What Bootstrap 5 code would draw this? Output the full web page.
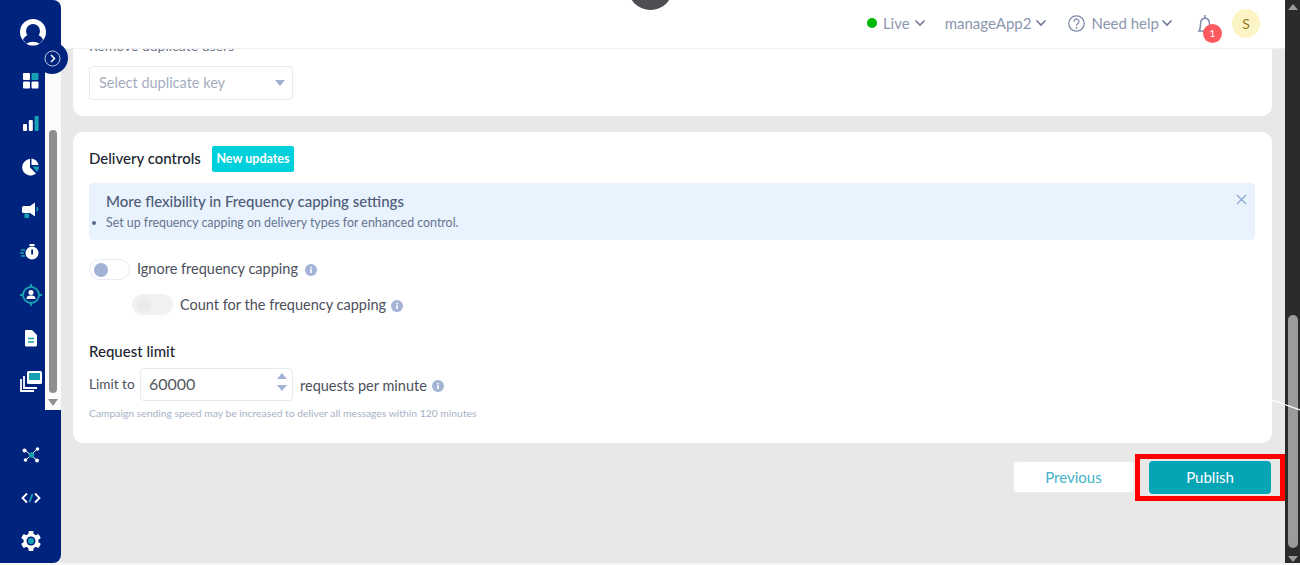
<!doctype html>
<html lang="en">
<head>
<meta charset="utf-8">
<title>Delivery controls</title>
<link href="https://cdn.jsdelivr.net/npm/bootstrap@5.3.0/dist/css/bootstrap.min.css" rel="stylesheet">
<style>
html,body{height:565px;overflow:hidden;background:#f6f6f6}
body{font-family:"Lato","Liberation Sans",sans-serif;color:#4b4f5c;font-size:14.5px}
.app-shell{height:563px;position:relative}
.side-rail{width:61px;background:#00237d;border-radius:0 8px 8px 0;position:relative;z-index:3;flex:none}
.rail-logo{height:60px;padding:19px 0 0 19px}
.rail-middle{height:350px}
.rail-icons{width:45px}
.rail-strip{width:16px;background:#fbfbfb;position:relative}
.rail-thumb{position:absolute;left:4px;width:8px;top:70px;height:263px;background:#8f8f8f;border-radius:4px}
.rail-arrow{position:absolute;left:3px;bottom:4px;width:0;height:0;border:5px solid transparent;border-top:7px solid #8f8f8f;border-bottom:0}
.rail-item{height:42.75px;padding-left:19px;display:flex;align-items:center}
.rail-bottom{padding-top:24px}
.rail-toggle{position:absolute;left:36px;top:42px;width:32px;height:32px;border-radius:50%;background:#00237d;display:flex;align-items:center;justify-content:center}
.work-area{background:#e8e8e8;min-width:0;position:relative;overflow:hidden}
.top-header{height:49px;background:#fff;border-bottom:1px solid #f0f0f0;position:relative;z-index:2;padding:0 25px 2px 0;color:#8c96ae;font-size:15px}
.hdr-dot{width:10px;height:10px;border-radius:50%;background:#00b800;margin-right:6px}
.hdr-txt{margin-right:4px}
.hdr-txt-last{margin-right:2px}
.chev-a{margin-right:19px}
.chev-b{margin-right:21px}
.hdr-help{margin-right:6px}
.hdr-badge{position:absolute;left:7px;top:13px;width:19px;height:19px;border-radius:50%;background:#ff5a5f;color:#fff;font-size:10px;display:flex;align-items:center;justify-content:center}
.hdr-bell{width:24px;height:24px;position:relative;margin-left:23px;margin-right:12px}
.hdr-avatar{width:28px;height:29px;border-radius:50%;background:#fdf4c5;color:#8d7a1e;font-size:14px}
.page-scroll{padding:0 13px 0 12px;height:514px}
.panel-box{background:#fff;border-radius:10px;padding:16px 17px 16px 16px}
.panel-cut{margin-top:-22px;height:89px;margin-bottom:16px}
.panel-cut .cut-label{height:16px;line-height:16px;margin-bottom:12px;margin-top:-5px;font-size:14px;color:#6d7488}
.dup-select{width:204px;height:34px;border:1px solid #e4e9f3;border-radius:4px;color:#a4adc0;font-size:14.5px;padding:0 7px 0 9px}
.dup-caret{width:0;height:0;border:5px solid transparent;border-top:6px solid #a3b1d0;border-bottom:0}
.panel-main{height:311px;padding-top:14px}
.panel-title{font-weight:500;color:#20242e;font-size:15px;width:110px;white-space:nowrap;margin-top:-1px}
.new-tag{background:#00cfdc;color:#fff;font-weight:700;font-size:12.5px;height:26px;width:82px;border-radius:2px;display:flex;align-items:center;justify-content:center;margin-left:13px}
.note-box{background:#e8f3fd;border:0;border-radius:4px;height:57px;margin:11px 0 19px;padding:9px 17px;position:relative;color:#66738f}
.note-title{font-size:15px;font-weight:500;color:#4d5b78;line-height:19px}
.note-text{font-size:12.4px;line-height:17px;margin-top:3px;position:relative}
.note-text::before{content:"";position:absolute;left:-14px;top:7px;width:4px;height:4px;background:#5d6a86;border-radius:50%}
.note-close{position:absolute;right:8px;top:11px;line-height:0}
.tog{width:41px;height:21px;border-radius:11px;border:1px solid #e7ebf5;background:#fff;position:relative;flex:none;display:block}
.tog::before{content:"";position:absolute;left:4px;top:3px;width:14px;height:14px;border-radius:50%;background:#a3b3d6}
.tog-off{background:#f1f1f1;border-color:#f1f1f1}
.tog-off::before{background:#ebebeb}
.row-one{height:21px;gap:7px}
.row-one-label{margin-top:-2px}
.row-two{height:21px;gap:7px;margin:14px 0 0 43px}
.info-tight{margin-left:-2px;margin-top:2px}
.limit-title{font-weight:500;color:#20242e;margin-top:27px;line-height:18px;font-size:15px}
.limit-row{margin-top:8px;height:33px}
.limit-label{width:45px;white-space:nowrap;font-size:13.6px}
.limit-box{width:153px;height:33px;margin:0 7px 0 6px;position:relative}
.limit-box .form-control{height:33px;border:1px solid #e4e9f3;border-radius:4px;padding:0 8px 2px;color:#55585f;font-size:16px;box-shadow:none}
.spin-up,.spin-down{position:absolute;right:6px;width:0;height:0;border:5px solid transparent}
.spin-up{top:5px;border-bottom:6px solid #a3b3d6;border-top:0}
.spin-down{top:17px;border-top:6px solid #a3b3d6;border-bottom:0}
.limit-txt{margin-top:2px}
.limit-info{margin-left:5px;margin-top:2px}
.limit-help{font-size:10.35px;color:#a7b2c7;margin-top:5px;line-height:14px}
.foot-btns{margin-top:18px;gap:15px;padding-right:1px}
.btn-prev{width:121px;height:32px;background:#fff;border:1px solid #eee;color:#3fb4c8;border-radius:4px;font-size:15px;padding:0}
.btn-prev:hover{background:#fff;color:#3fb4c8}
.btn-pub{width:122px;height:33px;background:#06a5b6;border:0;color:#fff;border-radius:4px;font-size:15px;padding:0}
.btn-pub:hover{background:#06a5b6;color:#fff}
.mark-wrap{position:relative}
.mark-box{position:absolute;left:-14px;top:-7px;width:150px;height:47px;border:5px solid #f00;pointer-events:none}
.page-bar{width:15px;background:#2b2b2b;position:relative;flex:none}
.page-thumb{position:absolute;left:3px;width:10px;top:315px;height:233px;background:#9b9b9b;border-radius:5px}
.bar-up,.bar-down{position:absolute;left:3px;width:0;height:0;border:5px solid transparent}
.bar-up{top:4px;border-bottom:6px solid #9b9b9b;border-top:0}
.bar-down{top:556px;border-top:6px solid #9b9b9b;border-bottom:0}
.dark-blob{position:absolute;left:628px;top:-35px;width:45px;height:45px;border-radius:50%;background:#4c4e53;z-index:4}
.stray-line{position:absolute;left:1272px;top:398px;z-index:4;line-height:0}
</style>
</head>
<body>
<div class="app-shell d-flex">
  <nav class="side-rail d-flex flex-column">
    <div class="rail-logo">
      <svg width="28" height="28" viewBox="0 0 28 28"><circle cx="14" cy="13" r="13" fill="#fff"/><circle cx="14" cy="12" r="7" fill="#00237d"/><path d="M4 21c2-5 6-6 10-6s8 1 10 6l-3 3H7z" fill="#00237d"/><path d="M8 25c2-3 10-3 12 0-3 2-9 2-12 0z" fill="#fff"/></svg>
    </div>
    <div class="rail-middle d-flex">
      <div class="rail-icons">
        <div class="rail-item"><svg width="24" height="24" viewBox="0 0 24 24"><rect x="4" y="4" width="7" height="7" rx="1" fill="#fff"/><rect x="12.500" y="4" width="7" height="7" rx="1" fill="#17a2b3"/><rect x="4" y="12.500" width="7" height="7" rx="1" fill="#fff"/><rect x="12.500" y="12.500" width="7" height="7" rx="1" fill="#fff"/></svg></div>
        <div class="rail-item"><svg width="24" height="24" viewBox="0 0 24 24"><rect x="4" y="12" width="4" height="7" rx="1" fill="#fff"/><rect x="9.800" y="8" width="4" height="11" rx="1" fill="#fff"/><rect x="15.600" y="4" width="4" height="15" rx="1" fill="#17a2b3"/></svg></div>
        <div class="rail-item"><svg width="24" height="24" viewBox="0 0 24 24"><path d="M11 4v8.500l6 6a8.300 8.300 0 1 1-6-14.500z" fill="#fff"/><path d="M12.500 3.500a8.500 8.500 0 0 1 7 6.500h-7z" fill="#fff"/><path d="M13.500 11.500h6.500a8 8 0 0 1-2 5.500z" fill="#17a2b3"/></svg></div>
        <div class="rail-item"><svg width="24" height="24" viewBox="0 0 24 24"><path d="M4.500 8H11l5-3.500v14L11 15H4.500A1.500 1.500 0 0 1 3 13.500v-4A1.500 1.500 0 0 1 4.500 8z" fill="#fff"/><rect x="5.500" y="15.500" width="4.500" height="4.500" fill="#17a2b3"/><path d="M17.500 8.500a3 3 0 0 1 0 5.500z" fill="#17a2b3"/></svg></div>
        <div class="rail-item"><svg width="24" height="24" viewBox="0 0 24 24"><circle cx="13" cy="13" r="6.500" fill="#fff"/><rect x="10.500" y="4" width="5" height="2" fill="#fff"/><rect x="12.200" y="9.500" width="1.800" height="5" fill="#00237d"/><path d="M2 10h4M1 13h4M2 16h4" stroke="#17a2b3" stroke-width="1.500"/></svg></div>
        <div class="rail-item"><svg width="24" height="24" viewBox="0 0 24 24"><circle cx="12" cy="12" r="8" fill="none" stroke="#17a2b3" stroke-width="1.800"/><path d="M12 1v4M12 19v4M1 12h4M19 12h4" stroke="#17a2b3" stroke-width="1.800"/><circle cx="12" cy="9.500" r="2.500" fill="#fff"/><path d="M7.500 16c0-3 2-3.500 4.500-3.500s4.500.5 4.500 3.500z" fill="#fff"/></svg></div>
        <div class="rail-item"><svg width="24" height="24" viewBox="0 0 24 24"><path d="M7 4h6l5 5v10a1.500 1.500 0 0 1-1.500 1.500h-9.500A1.500 1.500 0 0 1 6 19V5a1 1 0 0 1 1-1z" fill="#fff"/><path d="M9 12.500h6M9 16h6" stroke="#17a2b3" stroke-width="1.400"/></svg></div>
        <div class="rail-item"><svg width="24" height="24" viewBox="0 0 24 24"><rect x="8" y="2" width="15" height="13" rx="1.500" fill="#fff"/><rect x="10" y="4" width="11" height="7" fill="#17a2b3"/><path d="M5 7v12h13M2 10v12h13" fill="none" stroke="#fff" stroke-width="1.800"/></svg></div>
      </div>
      <div class="rail-strip"><div class="rail-thumb"></div><div class="rail-arrow"></div></div>
    </div>
    <div class="rail-bottom">
      <div class="rail-item"><svg width="24" height="24" viewBox="0 0 24 24"><path d="M6 7.500l6 4.500 6-6M7 17l5-5 6 5.500" fill="none" stroke="#fff" stroke-width="1"/><circle cx="12.500" cy="12" r="2.800" fill="#17a2b3"/><circle cx="5.500" cy="7.500" r="2" fill="#fff"/><circle cx="18.500" cy="6" r="1.800" fill="#fff"/><circle cx="6.500" cy="17" r="1.800" fill="#fff"/><circle cx="18" cy="17.500" r="2" fill="#fff"/></svg></div>
      <div class="rail-item"><svg width="24" height="24" viewBox="0 0 24 24"><path d="M8 7.500L3.500 12 8 16.500M16 7.500l4.500 4.500-4.500 4.500" fill="none" stroke="#fff" stroke-width="1.800"/><path d="M10.500 16l3-8" stroke="#17a2b3" stroke-width="1.800"/></svg></div>
      <div class="rail-item"><svg width="24" height="24" viewBox="0 0 24 24"><g fill="#fff"><rect x="9.500" y="2" width="5" height="20" rx="1"/><rect x="9.500" y="2" width="5" height="20" rx="1" transform="rotate(60 12 12)"/><rect x="9.500" y="2" width="5" height="20" rx="1" transform="rotate(120 12 12)"/><circle cx="12" cy="12" r="7.500"/></g><circle cx="12" cy="12" r="4.500" fill="#00237d"/><circle cx="12" cy="12" r="3" fill="#17a2b3"/></svg></div>
    </div>
    <div class="rail-toggle"><svg width="17" height="17" viewBox="0 0 17 17"><circle cx="8.500" cy="8.500" r="7.500" fill="none" stroke="#c4cde4" stroke-width="1"/><path d="M7 5l3.500 3.500L7 12" fill="none" stroke="#fff" stroke-width="1.500"/></svg></div>
  </nav>

  <main class="work-area flex-grow-1">
    <header class="top-header d-flex align-items-center justify-content-end">
      <span class="hdr-dot"></span>
      <span class="hdr-txt">Live</span>
      <svg class="chev-a" width="12" height="8" viewBox="0 0 12 8"><path d="M1.500 1.500L6 6l4.500-4.500" fill="none" stroke="#6f7b99" stroke-width="1.600"/></svg>
      <span class="hdr-txt">manageApp2</span>
      <svg class="chev-b" width="12" height="8" viewBox="0 0 12 8"><path d="M1.500 1.500L6 6l4.500-4.500" fill="none" stroke="#6f7b99" stroke-width="1.600"/></svg>
      <svg class="hdr-help" width="17" height="17" viewBox="0 0 17 17"><circle cx="8.500" cy="8.500" r="7.700" fill="none" stroke="#7e8aa8" stroke-width="1.300"/><path d="M6 6.500a2.500 2.500 0 1 1 4 2c-1 .7-1.500 1-1.500 2.200" fill="none" stroke="#7e8aa8" stroke-width="1.300"/><circle cx="8.500" cy="13" r=".9" fill="#7e8aa8"/></svg>
      <span class="hdr-txt-last">Need help</span>
      <svg width="12" height="8" viewBox="0 0 12 8"><path d="M1.500 1.500L6 6l4.500-4.500" fill="none" stroke="#6f7b99" stroke-width="1.600"/></svg>
      <span class="hdr-bell d-block"><svg width="20" height="24" viewBox="0 0 20 24"><path d="M3 19c1.500-2 1.500-5 1.500-7 0-3.500 1.500-5.500 4.500-6 3 .5 4.500 2.500 4.500 6 0 2 0 5 1.500 7z" fill="none" stroke="#7e8aa8" stroke-width="1.500"/><path d="M9 3v3" stroke="#7e8aa8" stroke-width="1.500"/></svg><span class="hdr-badge">1</span></span>
      <span class="hdr-avatar d-flex align-items-center justify-content-center">S</span>
    </header>
    <div class="page-scroll">
      <section class="panel-box panel-cut">
        <div class="cut-label">Remove duplicate users</div>
        <div class="dup-select d-flex align-items-center justify-content-between"><span>Select duplicate key</span><span class="dup-caret"></span></div>
      </section>
      <section class="panel-box panel-main">
        <div class="d-flex align-items-center"><span class="panel-title">Delivery controls</span><span class="new-tag">New updates</span></div>
        <div class="note-box">
          <div class="note-title">More flexibility in Frequency capping settings</div>
          <div class="note-text">Set up frequency capping on delivery types for enhanced control.</div>
          <span class="note-close"><svg width="11" height="11" viewBox="0 0 11 11"><path d="M1 1l9 9M10 1l-9 9" stroke="#8fa8d0" stroke-width="1.300"/></svg></span>
        </div>
        <div class="row-one d-flex align-items-center"><span class="tog"></span><span class="row-one-label">Ignore frequency capping</span>
          <svg width="12" height="12" viewBox="0 0 12 12"><circle cx="6" cy="6" r="6" fill="#a3b3d6"/><rect x="5.200" y="5" width="1.600" height="4" fill="#fff"/><rect x="5.200" y="2.800" width="1.600" height="1.500" fill="#fff"/></svg></div>
        <div class="row-two d-flex align-items-center"><span class="tog tog-off"></span><span>Count for the frequency capping</span>
          <svg class="info-tight" width="12" height="12" viewBox="0 0 12 12"><circle cx="6" cy="6" r="6" fill="#a3b3d6"/><rect x="5.200" y="5" width="1.600" height="4" fill="#fff"/><rect x="5.200" y="2.800" width="1.600" height="1.500" fill="#fff"/></svg></div>
        <div class="limit-title">Request limit</div>
        <div class="limit-row d-flex align-items-center"><span class="limit-label">Limit to</span>
          <div class="limit-box"><input class="form-control" type="text" value="60000" aria-label="Limit"><span class="spin-up"></span><span class="spin-down"></span></div>
          <span class="limit-txt">requests per minute</span>
          <svg class="limit-info" width="12" height="12" viewBox="0 0 12 12"><circle cx="6" cy="6" r="6" fill="#a3b3d6"/><rect x="5.200" y="5" width="1.600" height="4" fill="#fff"/><rect x="5.200" y="2.800" width="1.600" height="1.500" fill="#fff"/></svg></div>
        <div class="limit-help">Campaign sending speed may be increased to deliver all messages within 120 minutes</div>
      </section>
      <div class="foot-btns d-flex justify-content-end">
        <button class="btn btn-prev" type="button">Previous</button>
        <div class="mark-wrap"><button class="btn btn-pub" type="button">Publish</button><span class="mark-box"></span></div>
      </div>
    </div>
  </main>
  <aside class="page-bar"><span class="bar-up"></span><span class="page-thumb"></span><span class="bar-down"></span></aside>
  <div class="dark-blob"></div>
  <div class="stray-line"><svg width="28" height="14" viewBox="0 0 28 14"><path d="M0 2l28 10" stroke="#fff" stroke-width="1.300"/></svg></div>
</div>
<script src="https://cdn.jsdelivr.net/npm/bootstrap@5.3.0/dist/js/bootstrap.bundle.min.js"></script>
</body>
</html>
